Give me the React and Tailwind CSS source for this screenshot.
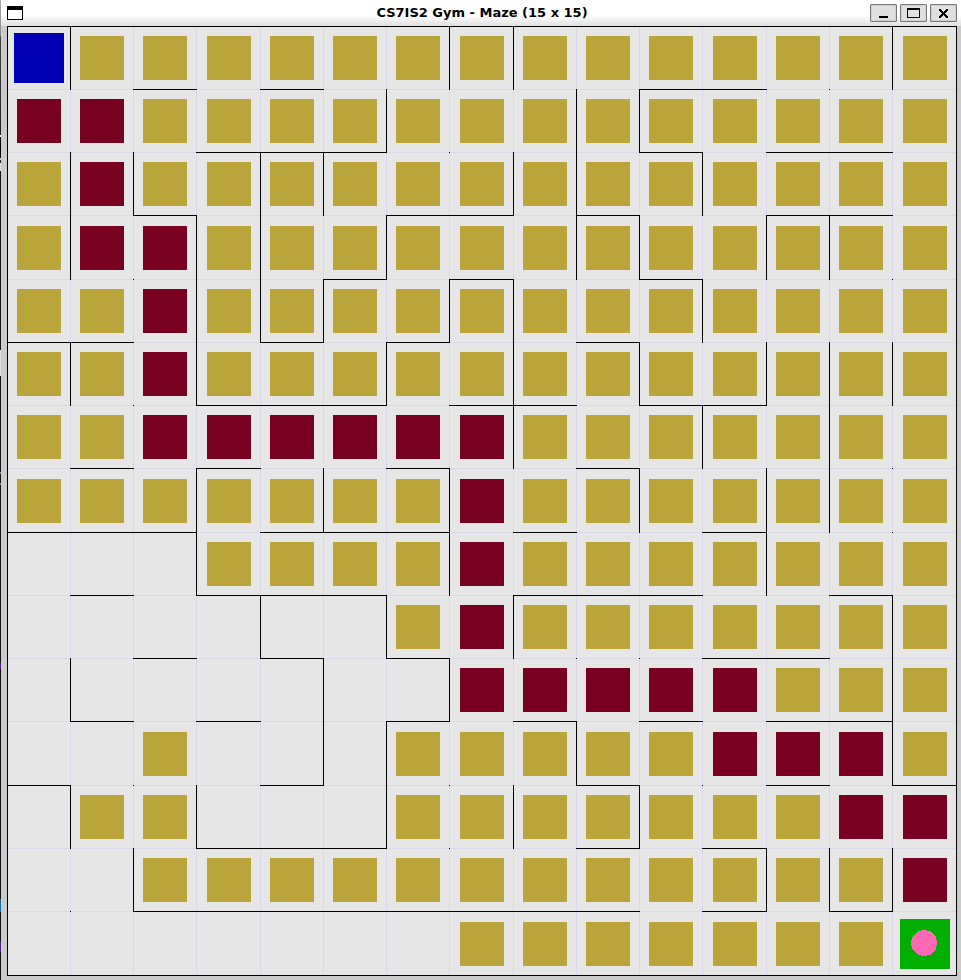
import React from 'react';

// Cell contents: S start, G goal, P final path, v visited, . untouched
const CELLS = [
  'Svvvvvvvvvvvvvv',
  'PPvvvvvvvvvvvvv',
  'vPvvvvvvvvvvvvv',
  'vPPvvvvvvvvvvvv',
  'vvPvvvvvvvvvvvv',
  'vvPvvvvvvvvvvvv',
  'vvPPPPPPvvvvvvv',
  'vvvvvvvPvvvvvvv',
  '...vvvvPvvvvvvv',
  '......vPvvvvvvv',
  '.......PPPPPvvv',
  '..v...vvvvvPPPv',
  '.vv...vvvvvvvPP',
  '..vvvvvvvvvvvvP',
  '.......vvvvvvvG',
];

// Columns whose left edge is a wall, row by row
const LEFT_WALLS = [
  [0, 1, 7, 8, 14],
  [0, 6, 9, 10],
  [0, 1, 2, 4, 5, 8, 9, 11],
  [0, 1, 3, 4, 6, 9, 10, 12, 13],
  [0, 3, 4, 5, 7, 8, 11],
  [0, 1, 3, 6, 8, 10, 12, 13, 14],
  [0, 8, 11, 13],
  [0, 3, 5, 7, 10, 12, 13],
  [0, 3, 7, 12],
  [0, 4, 6, 8, 14],
  [0, 1, 5, 7, 14],
  [0, 5, 6, 9, 14],
  [0, 1, 3, 6, 8, 10],
  [0, 2, 12, 13, 14],
  [0],
];

// Columns whose top edge is a wall, row by row
const TOP_WALLS = [
  [0, 1, 2, 3, 4, 5, 6, 7, 8, 9, 10, 11, 12, 13, 14],
  [2, 4, 10, 11],
  [3, 4, 5, 10, 12, 13],
  [2, 6, 7, 9, 12, 13],
  [5, 7, 10],
  [0, 1, 4, 6, 9],
  [3, 4, 5, 7, 8, 10, 11],
  [1, 3, 6, 9],
  [0, 1, 2, 4, 5, 6, 8, 11],
  [1, 3, 4, 5, 8, 9, 10, 13],
  [2, 4, 6, 11, 12],
  [1, 3, 6, 8, 10, 12, 13],
  [0, 4, 9, 12, 14],
  [3, 4, 5, 9, 11],
  [2, 3, 4, 5, 6, 7, 8, 9, 11, 13],
];

function Marker({ kind }) {
  if (kind === 'S') return <div className="size-[50px] bg-[#0000b4]" />;
  if (kind === 'P') return <div className="size-11 bg-[#780021]" />;
  if (kind === 'v') return <div className="size-11 bg-[#baa53b]" />;
  if (kind === 'G') {
    return (
      <div className="flex size-[50px] items-center justify-center bg-[#00af00] pr-0.5 pb-0.5">
        <svg viewBox="0 0 26 26" className="size-[26px]" shapeRendering="crispEdges" aria-label="Agent">
          <polygon
            fill="#ff69b4"
            points="10,0 16,0 16,1 19,1 25,7 25,10 26,10 26,16 25,16 25,19 19,25 16,25 16,26 10,26 10,25 7,25 1,19 1,16 0,16 0,10 1,10 1,7 7,1 10,1"
          />
        </svg>
      </div>
    );
  }
  return null;
}

function Cell({ kind, top, left }) {
  return (
    <div className="grid grid-cols-[1px_1fr] grid-rows-[1px_1fr]">
      <div className="bg-black" />
      <div className={top ? 'bg-black' : 'bg-[#dad8ea]'} />
      <div className={left ? 'bg-black' : 'bg-[#dad8ea]'} />
      <div className="flex items-center justify-center bg-[#e6e6e6]">
        <Marker kind={kind} />
      </div>
    </div>
  );
}

function WindowButton({ label, children }) {
  return (
    <button
      type="button"
      aria-label={label}
      className="flex h-[18px] w-[27px] items-center justify-center rounded-[1px] border border-[#777777] bg-[#e0e0e0] shadow-[inset_0_0_0_1px_#d2d2d2]"
    >
      {children}
    </button>
  );
}

function TitleBar() {
  return (
    <header className="grid h-[26px] grid-cols-[1fr_auto_1fr] items-center bg-linear-to-b from-white from-60% to-[#e0dfdf] pr-1 pl-1.5">
      <svg viewBox="0 0 16 14" className="h-[14px] w-4" shapeRendering="crispEdges" aria-hidden="true">
        <rect width="16" height="14" fill="#000" />
        <rect x="1" y="4" width="14" height="9" fill="#fff" />
      </svg>
      <h1 className="text-[13px] leading-4 font-bold whitespace-nowrap text-black">
        CS7IS2 Gym - Maze (15 x 15)
      </h1>
      <div className="flex justify-end gap-[3px]">
        <WindowButton label="Minimize">
          <svg viewBox="0 0 13 10" className="h-[10px] w-[13px]" shapeRendering="crispEdges">
            <rect x="2" y="8" width="9" height="2" fill="#000" />
          </svg>
        </WindowButton>
        <WindowButton label="Maximize">
          <svg viewBox="0 0 13 10" className="h-[10px] w-[13px]" shapeRendering="crispEdges">
            <path d="M0 0h13v10H0z M1 2v7h11V2z" fill="#000" fillRule="evenodd" />
          </svg>
        </WindowButton>
        <WindowButton label="Close">
          <svg viewBox="0 0 13 10" className="h-[10px] w-[13px]" shapeRendering="crispEdges">
            <path
              d="M2 1h2v1h1v1h1v1h1v-1h1v-1h1v-1h2v2h-1v1h-1v1h-1v1h1v1h1v1h1v2h-2v-1h-1v-1h-1v-1h-1v1h-1v1h-1v1h-2v-2h1v-1h1v-1h1v-1h-1v-1h-1v-1h-1z"
              fill="#000"
            />
          </svg>
        </WindowButton>
      </div>
    </header>
  );
}

export default function App() {
  return (
    <div className="flex font-['DejaVu_Sans',sans-serif]">
      {/* Sliver of the desktop visible beside the window */}
      <div className="w-px bg-[linear-gradient(#aaa_0px,#888_36px,#444_37px,#333_92px,#222_135px,#fff_135px,#fff_137px,#000_137px,#000_158px,#ccc_158px,#ccc_160px,#222_160px,#222_163px,#ddd_163px,#ddd_171px,#15141c_171px,#15141c_350px,#ddd_350px,#ddd_376px,#15141c_376px,#15141c_472px,#888_472px,#888_474px,#15141c_474px,#15141c_483px,#888_483px,#888_485px,#15141c_485px,#15141c_663px,#4b2080_663px,#4b2080_669px,#111118_669px,#111118_899px,#1070b0_899px,#1070b0_912px,#111118_912px,#111118_941px,#4b2080_941px,#4b2080_952px,#111118_952px)]" />
      <main className="min-w-0 flex-1 bg-[#cccbcb]">
        <TitleBar />
        <div className="pr-1 pb-1 pl-1.5">
          <div className="grid aspect-square w-full grid-cols-[63fr_63fr_63fr_64fr_63fr_63fr_63fr_64fr_63fr_63fr_63fr_64fr_63fr_63fr_64fr] grid-rows-[63fr_63fr_63fr_64fr_63fr_63fr_63fr_64fr_63fr_63fr_63fr_64fr_63fr_63fr_64fr] border-r border-b border-black">
            {CELLS.map((row, r) =>
              row.split('').map((kind, c) => (
                <Cell
                  key={`${r}-${c}`}
                  kind={kind}
                  top={TOP_WALLS[r].includes(c)}
                  left={LEFT_WALLS[r].includes(c)}
                />
              )),
            )}
          </div>
        </div>
      </main>
    </div>
  );
}
